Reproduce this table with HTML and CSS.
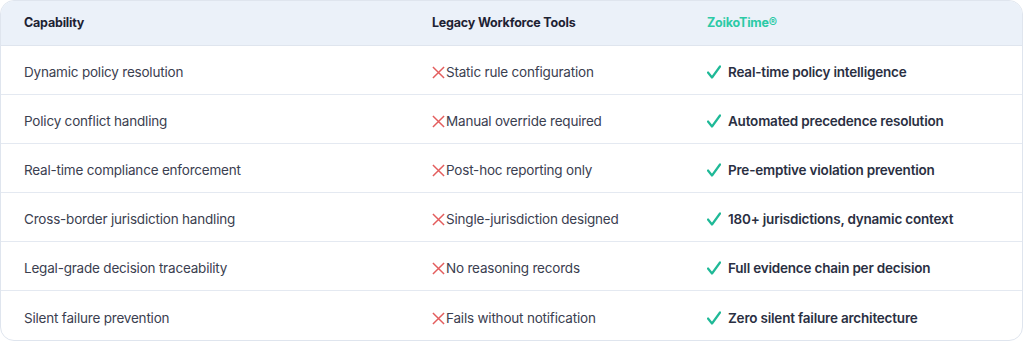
FILE: index.html
```html
<!DOCTYPE html>
<html lang="en">
<head>
<meta charset="utf-8">
<title>Comparison</title>
<link rel="stylesheet" href="styles.css">
</head>
<body>
<div class="card">
  <div class="row head">
    <div class="cell">Capability</div>
    <div class="cell">Legacy Workforce Tools</div>
    <div class="cell brand">ZoikoTime®</div>
  </div>
  <div class="row">
    <div class="cell">Dynamic policy resolution</div>
    <div class="cell legacy"><svg class="x" viewBox="0 0 14 14"><path d="M1 1L13 13M13 1L1 13"/></svg>Static rule configuration</div>
    <div class="cell zt"><svg class="ok" viewBox="0 0 14 14"><path d="M1 7.5L5 12.5L13 1.5"/></svg>Real-time policy intelligence</div>
  </div>
  <div class="row">
    <div class="cell">Policy conflict handling</div>
    <div class="cell legacy"><svg class="x" viewBox="0 0 14 14"><path d="M1 1L13 13M13 1L1 13"/></svg>Manual override required</div>
    <div class="cell zt"><svg class="ok" viewBox="0 0 14 14"><path d="M1 7.5L5 12.5L13 1.5"/></svg>Automated precedence resolution</div>
  </div>
  <div class="row">
    <div class="cell">Real-time compliance enforcement</div>
    <div class="cell legacy"><svg class="x" viewBox="0 0 14 14"><path d="M1 1L13 13M13 1L1 13"/></svg>Post-hoc reporting only</div>
    <div class="cell zt"><svg class="ok" viewBox="0 0 14 14"><path d="M1 7.5L5 12.5L13 1.5"/></svg>Pre-emptive violation prevention</div>
  </div>
  <div class="row">
    <div class="cell">Cross-border jurisdiction handling</div>
    <div class="cell legacy"><svg class="x" viewBox="0 0 14 14"><path d="M1 1L13 13M13 1L1 13"/></svg>Single-jurisdiction designed</div>
    <div class="cell zt"><svg class="ok" viewBox="0 0 14 14"><path d="M1 7.5L5 12.5L13 1.5"/></svg>180+ jurisdictions, dynamic context</div>
  </div>
  <div class="row">
    <div class="cell">Legal-grade decision traceability</div>
    <div class="cell legacy"><svg class="x" viewBox="0 0 14 14"><path d="M1 1L13 13M13 1L1 13"/></svg>No reasoning records</div>
    <div class="cell zt"><svg class="ok" viewBox="0 0 14 14"><path d="M1 7.5L5 12.5L13 1.5"/></svg>Full evidence chain per decision</div>
  </div>
  <div class="row last">
    <div class="cell">Silent failure prevention</div>
    <div class="cell legacy"><svg class="x" viewBox="0 0 14 14"><path d="M1 1L13 13M13 1L1 13"/></svg>Fails without notification</div>
    <div class="cell zt"><svg class="ok" viewBox="0 0 14 14"><path d="M1 7.5L5 12.5L13 1.5"/></svg>Zero silent failure architecture</div>
  </div>
</div>
</body>
</html>
```
FILE: styles.css
```css
html, body {
  margin: 0;
  padding: 0;
  background: #ffffff;
}
body {
  font-family: Inter, "Noto Sans", sans-serif;
  color: #3b4050;
}
.card {
  width: 1023px;
  height: 341px;
  box-sizing: border-box;
  border: 1px solid #dfe5ee;
  border-radius: 14px;
  overflow: hidden;
  background: #ffffff;
}
.row {
  display: grid;
  grid-template-columns: 408px 275px 1fr;
  height: 49px;
  border-bottom: 1px solid #e4e9f1;
  box-sizing: border-box;
  align-items: center;
  font-size: 13.5px;
  letter-spacing: -0.2px;
}
.row.last {
  border-bottom: none;
  height: 50px;
}
.row.head {
  height: 45px;
  background: #ebf1f9;
  font-size: 12.5px;
  font-weight: 700;
  color: #1d2233;
  border-bottom: 1px solid #dfe5ee;
  padding-bottom: 1px;
}
.cell {
  padding-left: 23px;
  display: flex;
  align-items: center;
  padding-top: 4px;
}
.head .cell {
  padding-top: 0;
}
.brand {
  color: #2ccaa6;
}
.x {
  width: 13px;
  height: 13px;
  flex: none;
  margin-right: 1px;
}
.x path {
  stroke: #e35d5d;
  stroke-width: 1.6;
  fill: none;
}
.ok {
  width: 14px;
  height: 14px;
  flex: none;
  margin-right: 7px;
}
.ok path {
  stroke: #1fb997;
  stroke-width: 2.2;
  fill: none;
  stroke-linecap: round;
  stroke-linejoin: round;
}
.zt {
  font-weight: 600;
  color: #2a2f42;
}
```
